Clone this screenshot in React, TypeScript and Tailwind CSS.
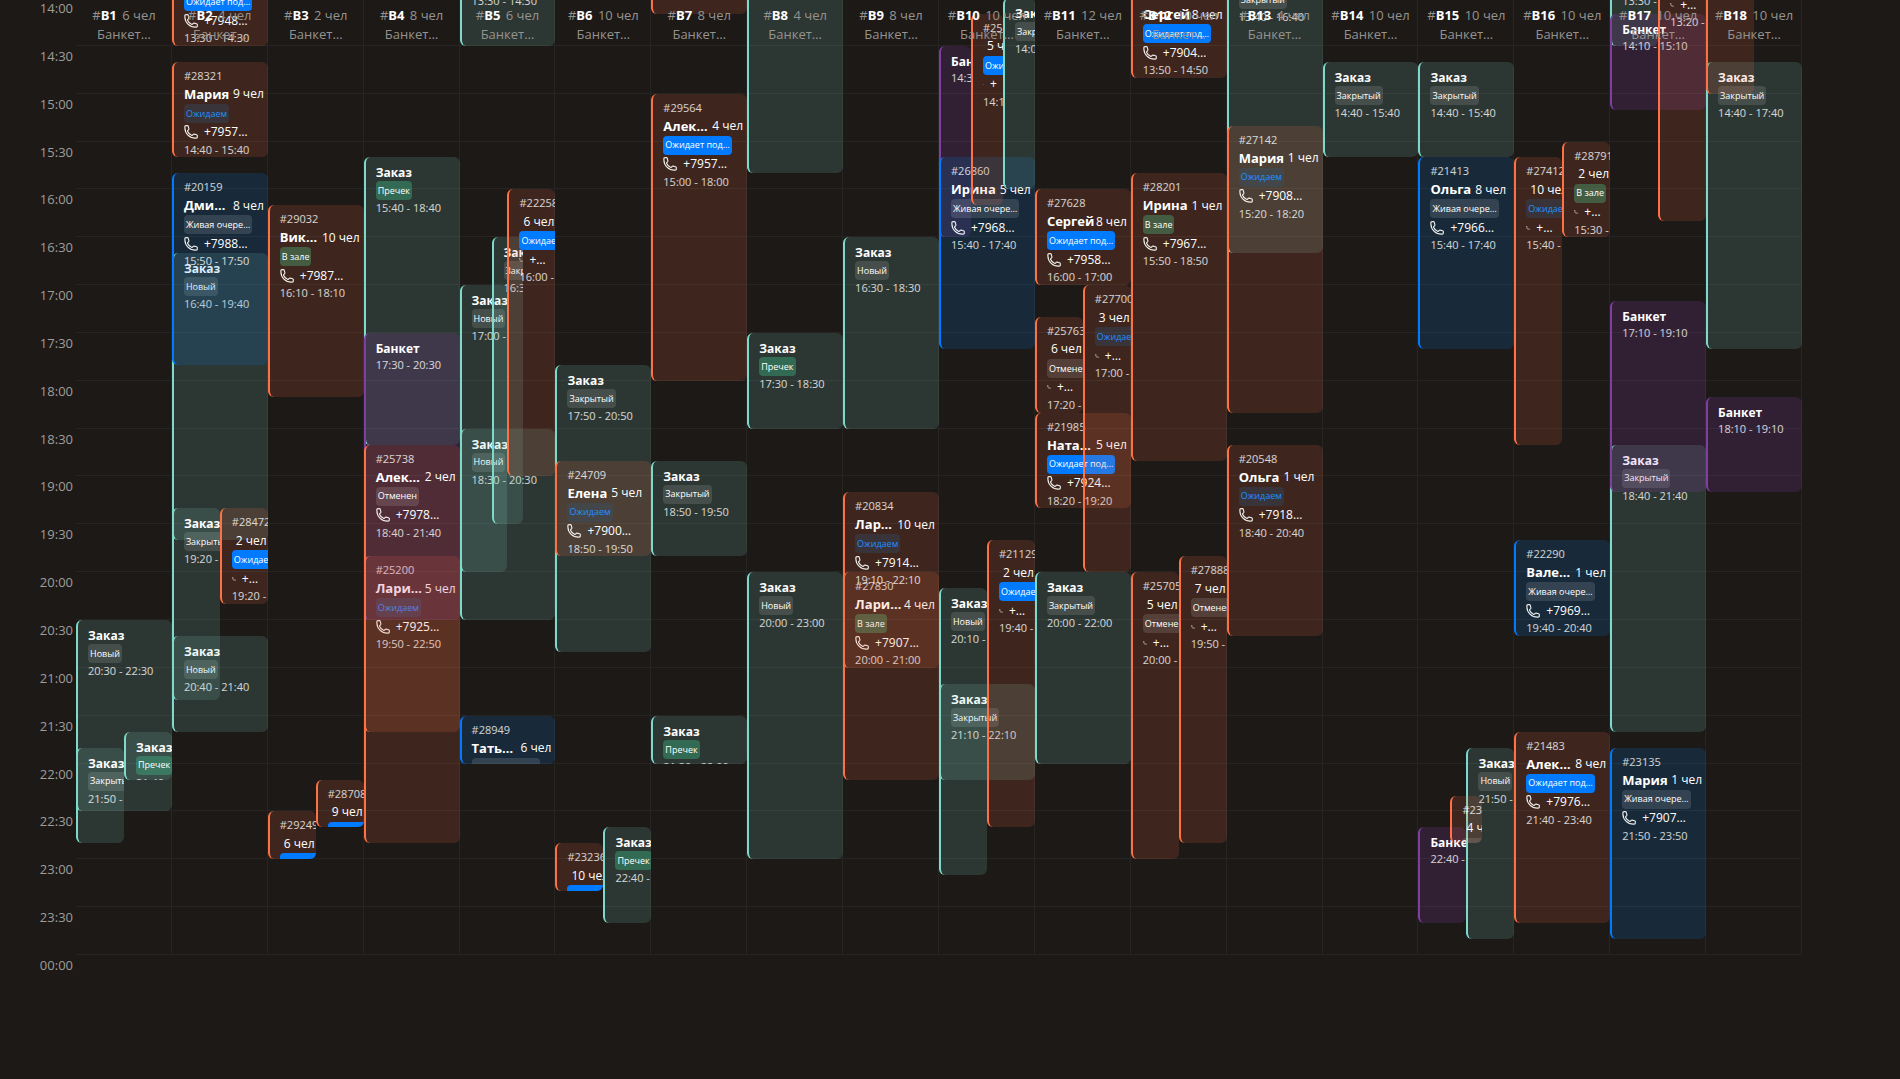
import React from "react";

type Kind = "order" | "guest" | "queue" | "banquet";
type Status = "new" | "closed" | "precheck" | "hall" | "wait" | "confirm" | "queue" | "cancelled";

interface Booking {
  kind: Kind;
  from: string;
  to: string;
  status?: Status;
  id?: string;
  name?: string;
  guests?: number;
  phone?: string;
  left?: number;
  span?: number;
}

interface Hall {
  seats: number;
  bookings: Booking[];
}

const DAY_START = 14 * 60;
const DAY_LENGTH = 10 * 60;

const KIND_STYLE: Record<Kind, string> = {
  order: "border-[#7ddacb] bg-[#8de0d0]/15",
  guest: "border-[#ff7043] bg-[#ff7043]/15",
  queue: "border-[#007bff] bg-[#0a8cff]/15",
  banquet: "border-[#7d3fa0] bg-[#b14be0]/15",
};

const STATUS: Record<Status, { label: string; style: string }> = {
  new: { label: "Новый", style: "bg-white/12 text-white" },
  closed: { label: "Закрытый", style: "bg-white/12 text-white" },
  cancelled: { label: "Отменен", style: "bg-white/12 text-white" },
  queue: { label: "Живая очере…", style: "bg-white/12 text-white" },
  precheck: { label: "Пречек", style: "bg-[#3cb886]/40 text-white" },
  hall: { label: "В зале", style: "bg-[#4caf78]/40 text-white" },
  wait: { label: "Ожидаем", style: "bg-[#2c5f8c]/25 text-[#1e90ff]" },
  confirm: { label: "Ожидает под…", style: "bg-[#007bff] text-white" },
};

const order = (from: string, to: string, status: Status, left = 0, span = 1): Booking => ({ kind: "order", from, to, status, left, span });
const banquet = (from: string, to: string, left = 0, span = 1): Booking => ({ kind: "banquet", from, to, left, span });
const guest = (id: string, name: string, guests: number, status: Status, phone: string, from: string, to: string, left = 0, span = 1): Booking => ({
  kind: status === "queue" ? "queue" : "guest", id, name, guests, status, phone, from, to, left, span,
});

const THIRD = 1 / 3;

const HALLS: Hall[] = [
  { seats: 6, bookings: [
    order("20:30", "22:30", "new"),
    order("21:50", "22:50", "closed", 0, 0.5),
    order("21:40", "22:10", "precheck", 0.5, 0.5),
  ] },
  { seats: 4, bookings: [
    guest("", "", 0, "confirm", "+7948…", "13:30", "14:30"),
    guest("28321", "Мария", 9, "wait", "+7957…", "14:40", "15:40"),
    order("16:40", "19:40", "new"),
    guest("20159", "Дми…", 8, "queue", "+7988…", "15:50", "17:50"),
    order("20:40", "21:40", "new"),
    order("19:20", "21:20", "closed", 0, 0.5),
    guest("28472", "", 2, "confirm", "+…", "19:20", "20:20", 0.5, 0.5),
  ] },
  { seats: 2, bookings: [
    guest("29032", "Вик…", 10, "hall", "+7987…", "16:10", "18:10"),
    guest("29249", "", 6, "confirm", "+…", "22:30", "23:00", 0, 0.5),
    guest("28708", "", 9, "confirm", "+…", "22:10", "22:40", 0.5, 0.5),
  ] },
  { seats: 8, bookings: [
    order("15:40", "18:40", "precheck"),
    guest("25200", "Лари…", 5, "wait", "+7925…", "19:50", "22:50"),
    banquet("17:30", "20:30"),
    guest("25738", "Алек…", 2, "cancelled", "+7978…", "18:40", "21:40"),
  ] },
  { seats: 6, bookings: [
    order("13:30", "14:30", "closed"),
    order("18:30", "20:30", "new"),
    order("17:00", "20:00", "new", 0, 0.5),
    order("16:30", "19:30", "closed", THIRD, THIRD),
    guest("22258", "", 6, "confirm", "+…", "16:00", "19:00", 0.5, 0.5),
    guest("28949", "Тать…", 6, "queue", "", "21:30", "22:00"),
  ] },
  { seats: 10, bookings: [
    order("17:50", "20:50", "closed"),
    guest("24709", "Елена", 5, "wait", "+7900…", "18:50", "19:50"),
    guest("23236", "", 10, "confirm", "+…", "22:50", "23:20", 0, 0.5),
    order("22:40", "23:40", "precheck", 0.5, 0.5),
  ] },
  { seats: 8, bookings: [
    guest("", "", 0, "confirm", "", "11:10", "14:10"),
    guest("29564", "Алек…", 4, "confirm", "+7957…", "15:00", "18:00"),
    order("18:50", "19:50", "closed"),
    order("21:30", "22:00", "precheck"),
  ] },
  { seats: 4, bookings: [
    order("12:50", "15:50", "closed"),
    order("17:30", "18:30", "precheck"),
    order("20:00", "23:00", "new"),
  ] },
  { seats: 8, bookings: [
    order("16:30", "18:30", "new"),
    guest("27830", "Лари…", 4, "hall", "+7907…", "20:00", "21:00"),
    guest("20834", "Лар…", 10, "wait", "+7914…", "19:10", "22:10"),
  ] },
  { seats: 10, bookings: [
    banquet("14:30", "16:30", 0, THIRD),
    guest("26860", "Ирина", 5, "queue", "+7968…", "15:40", "17:40"),
    guest("25", "", 5, "confirm", "+", "14:10", "16:10", THIRD, THIRD),
    order("14:00", "16:00", "closed", 2 * THIRD, THIRD),
    order("21:10", "22:10", "closed"),
    order("20:10", "23:10", "new", 0, 0.5),
    guest("21129", "", 2, "confirm", "+…", "19:40", "22:40", 0.5, 0.5),
  ] },
  { seats: 12, bookings: [
    guest("27628", "Сергей", 8, "confirm", "+7958…", "16:00", "17:00"),
    guest("25763", "", 6, "cancelled", "+…", "17:20", "18:20", 0, 0.5),
    guest("21985", "Ната…", 5, "confirm", "+7924…", "18:20", "19:20"),
    guest("27700", "", 3, "wait", "+…", "17:00", "20:00", 0.5, 0.5),
    order("20:00", "22:00", "closed"),
  ] },
  { seats: 10, bookings: [
    guest("", "Сергей", 8, "confirm", "+7904…", "13:50", "14:50"),
    guest("28201", "Ирина", 1, "hall", "+7967…", "15:50", "18:50"),
    guest("25705", "", 5, "cancelled", "+…", "20:00", "23:00", 0, 0.5),
    guest("27888", "", 7, "cancelled", "+…", "19:50", "22:50", 0.5, 0.5),
  ] },
  { seats: 4, bookings: [
    order("13:40", "16:40", "closed"),
    guest("27142", "Мария", 1, "wait", "+7908…", "15:20", "18:20"),
    guest("20548", "Ольга", 1, "wait", "+7918…", "18:40", "20:40"),
  ] },
  { seats: 10, bookings: [order("14:40", "15:40", "closed")] },
  { seats: 10, bookings: [
    order("14:40", "15:40", "closed"),
    guest("21413", "Ольга", 8, "queue", "+7966…", "15:40", "17:40"),
    banquet("22:40", "23:40", 0, 0.5),
    order("21:50", "23:50", "new", 0.5, 0.5),
    guest("23", "", 4, "cancelled", "+", "22:20", "22:50", THIRD, THIRD),
  ] },
  { seats: 10, bookings: [
    guest("27412", "", 10, "wait", "+…", "15:40", "18:40", 0, 0.5),
    guest("28791", "", 2, "hall", "+…", "15:30", "16:30", 0.5, 0.5),
    guest("22290", "Вале…", 1, "queue", "+7969…", "19:40", "20:40"),
    guest("21483", "Алек…", 8, "confirm", "+7976…", "21:40", "23:40"),
  ] },
  { seats: 10, bookings: [
    order("13:30", "14:30", "closed", 0, 0.5),
    banquet("14:10", "15:10"),
    guest("", "", 0, "confirm", "+…", "13:20", "16:20", 0.5, 0.5),
    order("18:40", "21:40", "closed"),
    banquet("17:10", "19:10"),
    guest("23135", "Мария", 1, "queue", "+7907…", "21:50", "23:50"),
  ] },
  { seats: 10, bookings: [
    order("14:40", "17:40", "closed"),
    guest("", "", 0, "confirm", "", "12:00", "15:00", 0, 0.5),
    banquet("18:10", "19:10"),
  ] },
];

const SLOTS = Array.from({ length: 20 }, (_, i) => {
  const t = DAY_START + i * 30;
  return `${Math.floor(t / 60)}:${t % 60 === 0 ? "00" : "30"}`;
});

const minutes = (time: string) => {
  const [h, m] = time.split(":").map(Number);
  return h * 60 + m;
};

function PhoneIcon({ size }: { size: string }) {
  return (
    <svg viewBox="0 0 24 24" className={`${size} shrink-0 text-white/90`} fill="none" stroke="currentColor" strokeWidth="2" strokeLinejoin="round" strokeLinecap="round" aria-hidden="true">
      <path d="M1.500 4.500C1.500 14.400 9.600 22.500 19.500 22.500h1.500a1.800 1.800 0 0 0 1.800-1.800v-2.500c0-.7-.5-1.300-1.200-1.500l-4.300-1.100c-.6-.1-1.200.1-1.600.6l-1 1.300c-.3.400-.8.500-1.300.4a13 13 0 0 1-7.300-7.300c-.2-.5 0-1 .4-1.300l1.300-1c.5-.4.700-1 .6-1.600L7.300 2.400C7.100 1.700 6.500 1.200 5.800 1.200H3.300A1.800 1.800 0 0 0 1.500 3z" />
    </svg>
  );
}

function BookingCard({ b }: { b: Booking }) {
  const from = minutes(b.from);
  const isGuest = b.kind === "guest" || b.kind === "queue";
  const span = b.span ?? 1;
  const place = {
    top: `${((from - DAY_START) / DAY_LENGTH) * 100}%`,
    height: `${((minutes(b.to) - from) / DAY_LENGTH) * 100}%`,
    left: `${(b.left ?? 0) * 100}%`,
    width: `${span * 100}%`,
  };
  const iconSize = span === 1 ? "size-3.5" : span === 0.5 ? "size-1" : "size-px";
  return (
    <article style={place} className={`absolute overflow-hidden rounded-md border-l-2 pr-1 pl-2.5 text-[11px] whitespace-nowrap ${isGuest ? "pt-1.5" : "pt-2"} ${KIND_STYLE[b.kind]}`}>
      {isGuest ? (
        <>
          <p className="h-[17px] leading-4 text-white/80">{b.id ? `#${b.id}` : ""}</p>
          <div className="flex h-[19px] items-center gap-1 text-white">
            <strong className={`min-w-0 text-[13px] leading-[19px] font-bold ${b.name?.endsWith("…") ? "flex-1" : ""}`}>{b.name}</strong>
            {b.guests ? <span className="shrink-0 text-xs">{b.guests} чел</span> : null}
          </div>
        </>
      ) : (
        <h3 className="h-4 text-xs leading-4 font-bold text-white">{b.kind === "banquet" ? "Банкет" : "Заказ"}</h3>
      )}
      {b.status && (
        <span className={`flex h-[19px] w-fit max-w-[72px] items-center rounded px-0.5 text-[9px] ${STATUS[b.status].style}`}>{STATUS[b.status].label}</span>
      )}
      {isGuest && (
        <div className="flex h-[19px] items-center gap-1.5 text-xs text-white">
          {b.phone ? <PhoneIcon size={iconSize} /> : null}
          <span>{b.phone}</span>
        </div>
      )}
      <time className="block h-4 leading-4 text-white/80">{b.from} - {b.to}</time>
    </article>
  );
}

export default function App() {
  return (
    <main className="min-h-screen overflow-hidden bg-[#1c1917] pr-[98px] pb-[120px] font-['Open_Sans','Noto_Sans',sans-serif]">
      <div className="relative -mt-0.5 flex">
        <div className="h-[957px] w-[76px] shrink-0 text-right text-[13px] text-[#a09d99]">
          <div className="flex h-full flex-col pr-[3px]">
            {SLOTS.map((slot) => (
              <div key={slot} className="min-h-0 flex-1 leading-5">{slot}</div>
            ))}
            <div className="h-0 leading-5">00:00</div>
          </div>
        </div>

        <div className="grid h-[957px] flex-1 grid-cols-18">
          {HALLS.map((hall, i) => (
            <section key={i} aria-label={`B${i + 1}`} className="relative flex min-w-0 flex-col">
              {SLOTS.map((slot) => (
                <div key={slot} className="flex-1 border-r border-b border-white/5" />
              ))}
              {hall.bookings.map((b, k) => (
                <BookingCard key={k} b={b} />
              ))}
              <header className="absolute inset-x-0 top-2 text-center text-[13px] leading-[19px] whitespace-nowrap text-[#96938f]">
                <h2>
                  #<b className="mr-0.5 font-bold text-white">B{i + 1}</b> {hall.seats} чел
                </h2>
                <p>Банкет…</p>
              </header>
            </section>
          ))}
        </div>
      </div>
    </main>
  );
}
